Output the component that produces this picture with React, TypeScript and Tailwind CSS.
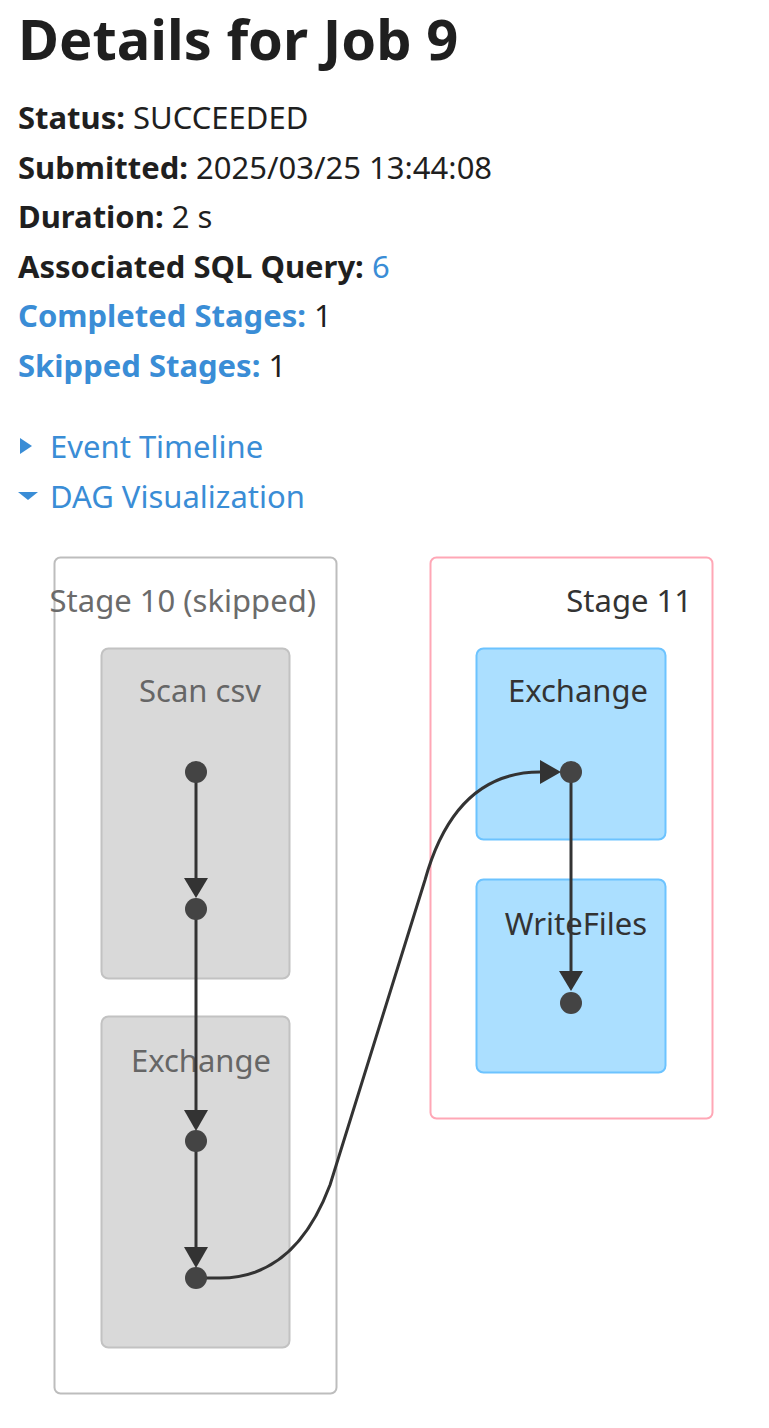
import React from "react";

const FONT = "font-['Noto_Sans','Open_Sans',sans-serif]";

// edge from stage 10 exchange into stage 11 exchange
const crossEdge = "M196,738 L220,738 Q295,738 330,645 L425,340 Q455,232 540,232";

function Dot({ x, y }: { x: number; y: number }) {
  return <circle cx={x} cy={y} r={11} fill="#444" />;
}

function DownArrow({ x, top, tip }: { x: number; top: number; tip: number }) {
  return (
    <polygon points={`${x - 12},${top} ${x + 12},${top} ${x},${tip}`} fill="#333" />
  );
}

function DagGraph() {
  return (
    <svg width={769} height={880} className="block" fontFamily="'Noto Sans', 'Open Sans', sans-serif">
      {/* stage 10 (skipped) */}
      <rect x={54.5} y={17.5} width={282} height={836} rx={6} fill="#fff" stroke="#bdbdbd" strokeWidth={2} />
      <text x={316} y={72} textAnchor="end" fontSize={31} fill="#6b6b6b">
        Stage 10 (skipped)
      </text>
      <rect x={101.5} y={108.5} width={188} height={330} rx={7} fill="#d9d9d9" stroke="#c2c2c2" strokeWidth={2} />
      <text x={200} y={162} textAnchor="middle" fontSize={31} fill="#666">
        Scan csv
      </text>
      <rect x={101.5} y={476.5} width={188} height={331} rx={7} fill="#d9d9d9" stroke="#c2c2c2" strokeWidth={2} />
      <text x={201} y={532} textAnchor="middle" fontSize={31} fill="#666">
        Exchange
      </text>

      {/* stage 11 */}
      <rect x={430.5} y={17.5} width={282} height={561} rx={6} fill="#fff" stroke="#ffa7b6" strokeWidth={2} />
      <text x={692} y={72} textAnchor="end" fontSize={31} fill="#333">
        Stage 11
      </text>
      <rect x={476.5} y={108.5} width={189} height={191} rx={7} fill="#abdfff" stroke="#6cc3ff" strokeWidth={2} />
      <text x={578} y={162} textAnchor="middle" fontSize={31} fill="#333">
        Exchange
      </text>
      <rect x={476.5} y={339.5} width={189} height={193} rx={7} fill="#abdfff" stroke="#6cc3ff" strokeWidth={2} />
      <text x={576} y={395} textAnchor="middle" fontSize={31} fill="#333">
        WriteFiles
      </text>

      {/* edges */}
      <g stroke="#333" strokeWidth={3} fill="none">
        <line x1={196} y1={232} x2={196} y2={345} />
        <line x1={196} y1={370} x2={196} y2={578} />
        <line x1={196} y1={601} x2={196} y2={715} />
        <line x1={571} y1={232} x2={571} y2={440} />
        <path d={crossEdge} />
      </g>
      <DownArrow x={196} top={338} tip={358} />
      <DownArrow x={196} top={570} tip={591} />
      <DownArrow x={196} top={707} tip={728} />
      <DownArrow x={571} top={431} tip={451} />
      <polygon points="540,220 540,244 561,232" fill="#333" />

      <Dot x={196} y={232} />
      <Dot x={196} y={369} />
      <Dot x={196} y={601} />
      <Dot x={196} y={738} />
      <Dot x={571} y={232} />
      <Dot x={571} y={463} />
    </svg>
  );
}

function Row({ label, children, link }: { label: string; children: React.ReactNode; link?: boolean }) {
  return (
    <li className="leading-[49.5px]">
      <strong className={link ? "font-bold text-[#3a8dd6]" : "font-bold"}>{label}</strong> {children}
    </li>
  );
}

export default function App() {
  return (
    <div className={`${FONT} bg-white text-[#1f1f1f] min-h-[1428px] pl-[18px]`}>
      <h1 className="text-[56px] leading-[76px] font-bold">Details for Job 9</h1>

      <ul className="mt-[17px] text-[31px]">
        <Row label="Status:">SUCCEEDED</Row>
        <Row label="Submitted:">2025/03/25 13:44:08</Row>
        <Row label="Duration:">2 s</Row>
        <Row label="Associated SQL Query:">
          <span className="text-[#3a8dd6]">6</span>
        </Row>
        <Row label="Completed Stages:" link>
          1
        </Row>
        <Row label="Skipped Stages:" link>
          1
        </Row>
      </ul>

      <div className="mt-[31px] text-[31px] leading-[50px] text-[#3a8dd6]">
        <div className="flex items-center">
          <svg width={32} height={16} viewBox="0 0 32 16" className="shrink-0">
            <polygon points="2,0 14,8 2,16" fill="#3a8dd6" />
          </svg>
          <span>Event Timeline</span>
        </div>
        <div className="flex items-center">
          <svg width={32} height={16} viewBox="0 0 32 16" className="shrink-0">
            <polygon points="0,4 20,4 10,12" fill="#3a8dd6" />
          </svg>
          <span>DAG Visualization</span>
        </div>
      </div>

      <div className="-ml-[18px] mt-[19px]">
        <DagGraph />
      </div>
    </div>
  );
}
